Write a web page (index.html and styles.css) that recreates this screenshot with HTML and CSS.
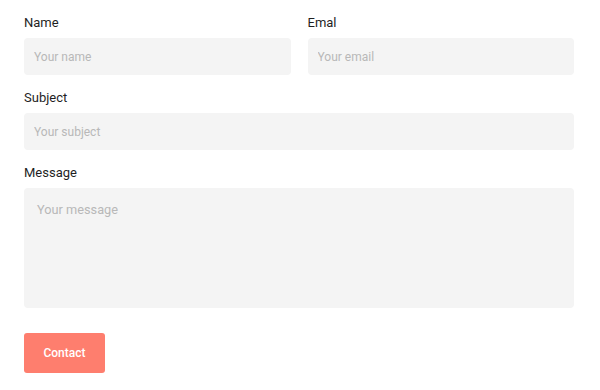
FILE: index.html
```html
<!DOCTYPE html>
<html lang="en">
<head>
<meta charset="utf-8">
<title>Contact</title>
<link rel="stylesheet" href="styles.css">
</head>
<body>
<form class="form">
  <div class="row two">
    <div class="field">
      <label class="label" for="name">Name</label>
      <input class="input" id="name" type="text" placeholder="Your name">
    </div>
    <div class="field">
      <label class="label" for="email">Emal</label>
      <input class="input" id="email" type="email" placeholder="Your email">
    </div>
  </div>
  <div class="field">
    <label class="label" for="subject">Subject</label>
    <input class="input" id="subject" type="text" placeholder="Your subject">
  </div>
  <div class="field">
    <label class="label" for="message">Message</label>
    <textarea class="input textarea" id="message" placeholder="Your message"></textarea>
  </div>
  <button class="button" type="button">Contact</button>
</form>
</body>
</html>
```
FILE: styles.css
```css
* { box-sizing: border-box; }
html, body { margin: 0; background: #fff; }
body {
  font-family: Roboto, "Liberation Sans", sans-serif;
  color: #222;
  padding: 15px 0 0 24px;
}
.form {
  width: 550px;
  display: flex;
  flex-direction: column;
  gap: 15px;
}
.row.two {
  display: grid;
  grid-template-columns: 1fr 1fr;
  gap: 17px;
}
.field {
  display: flex;
  flex-direction: column;
  gap: 7px;
}
.label {
  font-size: 13px;
  line-height: 16px;
  color: #1f1f1f;
}
.input {
  display: block;
  width: 100%;
  height: 37px;
  border: none;
  outline: none;
  background: #f4f4f4;
  border-radius: 4px;
  padding: 0 10px;
  font-family: Roboto, "Liberation Sans", sans-serif;
  font-size: 12px;
  color: #333;
}
.input::placeholder { color: #b8b8b8; }
.textarea {
  height: 120px;
  padding: 14px 13px;
  font-size: 12.75px;
  line-height: 15px;
  resize: vertical;
}
.textarea::-webkit-resizer { background: transparent; }
.button {
  margin-top: 10px;
  width: 81px;
  height: 40px;
  border: none;
  border-radius: 3px;
  background: #fe7e6e;
  color: #fff;
  font-family: Roboto, "Liberation Sans", sans-serif;
  font-weight: 500;
  font-size: 12px;
  cursor: pointer;
}
```
